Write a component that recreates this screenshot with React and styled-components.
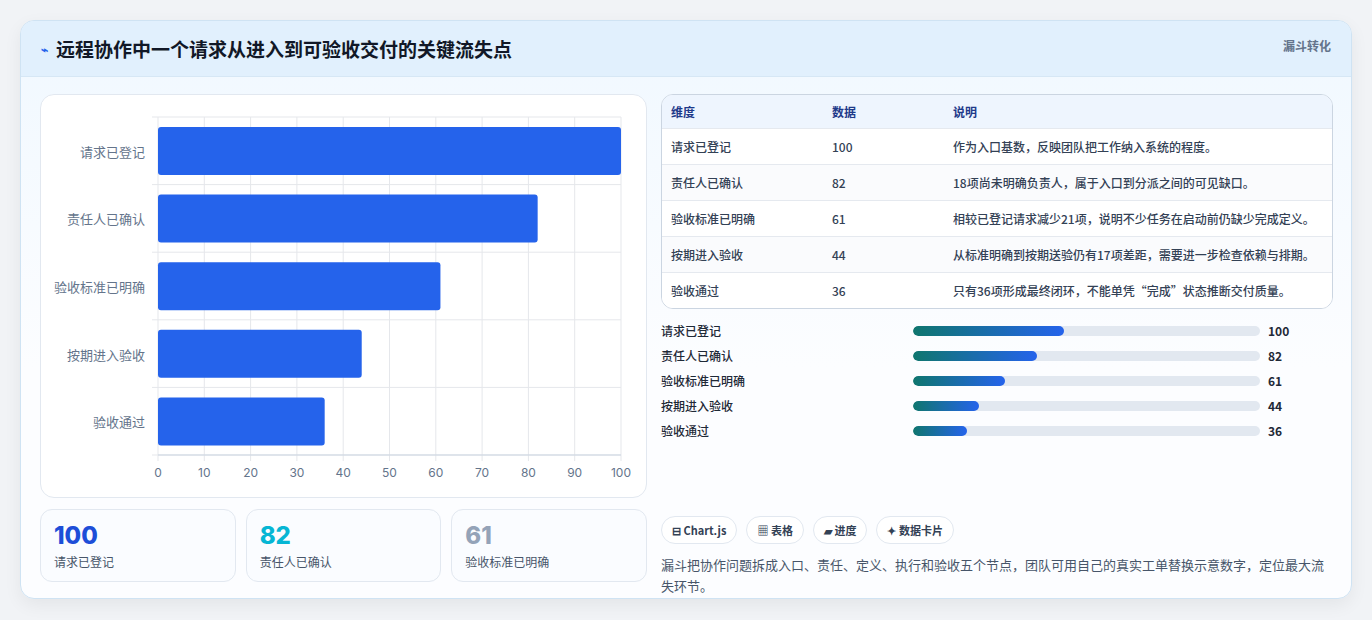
import React from "react";
import styled, { createGlobalStyle } from "styled-components";

const G = createGlobalStyle`
  body{margin:0;background:#f1f3f6;font-family:"Noto Sans CJK SC","Noto Sans",sans-serif;}
`;
const data = [
  ["请求已登记", 100, "作为入口基数，反映团队把工作纳入系统的程度。"],
  ["责任人已确认", 82, "18项尚未明确负责人，属于入口到分派之间的可见缺口。"],
  ["验收标准已明确", 61, "相较已登记请求减少21项，说明不少任务在启动前仍缺少完成定义。"],
  ["按期进入验收", 44, "从标准明确到按期送验仍有17项差距，需要进一步检查依赖与排期。"],
  ["验收通过", 36, "只有36项形成最终闭环，不能单凭“完成”状态推断交付质量。"],
];
const Page = styled.div`padding:20px 20px 20px 20px;height:620px;box-sizing:border-box;`;
const Card = styled.div`border:1px solid #cfe3f3;border-radius:14px;background:linear-gradient(180deg,#f0f8ff,#fcfdff 60%);box-shadow:0 6px 18px rgba(0,0,0,.06);overflow:hidden;height:579px;box-sizing:border-box;`;
const Head = styled.div`height:55px;background:#e1f0fd;border-bottom:1px solid #d6e7f5;display:flex;align-items:center;justify-content:space-between;padding:0 20px;`;
const Title = styled.h1`margin:0;font-size:19px;font-weight:700;color:#111827;display:flex;align-items:center;gap:8px;`;
const Tag = styled.span`font-size:12px;font-weight:700;color:#64748b;align-self:flex-start;margin-top:16px;`;
const Body = styled.div`display:grid;grid-template-columns:607px 672px;gap:14px;padding:17px 19px 0 19px;`;
const Col = styled.div`display:flex;flex-direction:column;`;
const ChartBox = styled.div`height:404px;box-sizing:border-box;border:1px solid #e2e8f0;border-radius:14px;background:#fff;position:relative;`;
const Stats = styled.div`display:grid;grid-template-columns:repeat(3,1fr);gap:10px;margin-top:11px;`;
const Stat = styled.div`height:73px;box-sizing:border-box;border:1px solid #e2e8f0;border-radius:12px;background:#fafcff;padding:12px 13px;`;
const Num = styled.div`font-size:24px;font-weight:800;color:${p=>p.c};line-height:28px;font-family:"Inter",sans-serif;`;
const SL = styled.div`font-size:12px;color:#475569;margin-top:3px;`;
const Table = styled.div`border:1px solid #cbd5e1;border-radius:12px;overflow:hidden;background:#fff;`;
const Row = styled.div`display:grid;grid-template-columns:161px 121px 1fr;height:${p=>p.h?33:35}px;align-items:center;padding-left:9px;font-size:12px;color:${p=>p.h?"#1e3a8a":"#334155"};font-weight:${p=>p.h?700:500};background:${p=>p.h?"#eef5fe":p.alt?"#fafbfd":"#fff"};border-top:${p=>p.h?"none":"1px solid #e5e9ef"};`;
const Bars = styled.div`display:flex;flex-direction:column;gap:9px;margin-top:13px;`;
const BRow = styled.div`display:grid;grid-template-columns:252px 347px auto;align-items:center;height:16px;font-size:12px;color:#1f2937;font-weight:500;`;
const Track = styled.div`height:10px;border-radius:5px;background:#e2e8f0;overflow:hidden;`;
const Fill = styled.div`height:100%;border-radius:5px;background:linear-gradient(90deg,#0f766e,#2563eb);`;
const BV = styled.span`padding-left:8px;font-weight:700;font-size:12px;`;
const Chips = styled.div`display:flex;gap:9px;margin-top:78px;`;
const Chip = styled.span`height:28px;box-sizing:border-box;border:1px solid #e2e8f0;border-radius:14px;background:#fff;padding:0 10px;display:flex;align-items:center;font-size:11px;font-weight:700;color:#334155;`;
const Para = styled.p`margin:10px 0 0;font-size:13px;line-height:21px;color:#475569;`;
const YL = styled.div`position:absolute;right:${607-106}px;font-size:13px;color:#64748b;transform:translateY(-50%);`;
const XL = styled.div`position:absolute;top:370px;font-size:12px;color:#64748b;transform:translateX(-50%);font-family:"Inter",sans-serif;`;

export default function App(){
  const x0=117, w=463, y0=22, rh=67.6;
  return <><G/><Page><Card>
    <Head><Title><span style={{color:"#2563eb",fontSize:12}}>⌁</span>远程协作中一个请求从进入到可验收交付的关键流失点</Title><Tag>漏斗转化</Tag></Head>
    <Body>
      <Col>
        <ChartBox>
          <svg width="605" height="402" style={{position:"absolute",left:0,top:0}}>
            {Array.from({length:11}).map((_,i)=><line key={i} x1={x0+i*w/10} x2={x0+i*w/10} y1={y0} y2={y0+338+6} stroke="#e5e7eb"/>)}
            {Array.from({length:6}).map((_,i)=><line key={i} x1={x0-6} x2={x0+w} y1={y0+i*rh} y2={y0+i*rh} stroke="#e5e7eb"/>)}
            <line x1={x0} x2={x0+w} y1={y0+338} y2={y0+338} stroke="#cbd5e1"/>
            {data.map((d,i)=><rect key={i} x={x0} y={y0+i*rh+10} width={w*d[1]/100} height={48} rx="3" fill="#2563eb"/>)}
          </svg>
          {data.map((d,i)=><YL key={i} style={{top:y0+i*rh+rh/2}}>{d[0]}</YL>)}
          {Array.from({length:11}).map((_,i)=><XL key={i} style={{left:x0+i*w/10}}>{i*10}</XL>)}
        </ChartBox>
        <Stats>
          <Stat><Num c="#1d4ed8">100</Num><SL>请求已登记</SL></Stat>
          <Stat><Num c="#06b6d4">82</Num><SL>责任人已确认</SL></Stat>
          <Stat><Num c="#94a3b8">61</Num><SL>验收标准已明确</SL></Stat>
        </Stats>
      </Col>
      <Col>
        <Table>
          <Row h><span>维度</span><span>数据</span><span>说明</span></Row>
          {data.map((d,i)=><Row key={i} alt={i%2}><span>{d[0]}</span><span>{d[1]}</span><span>{d[2]}</span></Row>)}
        </Table>
        <Bars>{data.map((d,i)=><BRow key={i}><span>{d[0]}</span><Track><Fill style={{width:d[1]*0.435+"%"}}/></Track><BV>{d[1]}</BV></BRow>)}</Bars>
        <Chips><Chip>⊟ Chart.js</Chip><Chip>▦ 表格</Chip><Chip>▰ 进度</Chip><Chip>✦ 数据卡片</Chip></Chips>
        <Para>漏斗把协作问题拆成入口、责任、定义、执行和验收五个节点，团队可用自己的真实工单替换示意数字，定位最大流失环节。</Para>
      </Col>
    </Body>
  </Card></Page></>;
}
